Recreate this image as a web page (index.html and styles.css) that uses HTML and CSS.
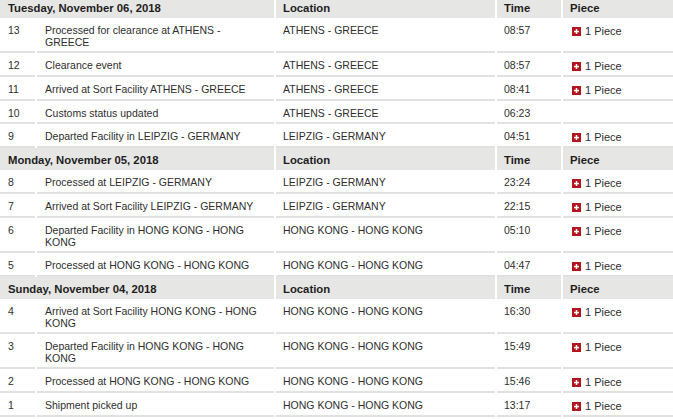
FILE: index.html
```html
<!DOCTYPE html>
<html lang="en">
<head>
<meta charset="utf-8">
<title>Shipment tracking</title>
<link rel="stylesheet" href="styles.css">
</head>
<body>
<svg width="0" height="0" class="defs" aria-hidden="true">
  <symbol id="plus" viewBox="0 0 9 9">
    <rect width="9" height="9" fill="#b3151d"/>
    <rect x="2" y="3.8" width="5" height="1.5" fill="#fff"/>
    <rect x="3.75" y="2" width="1.5" height="5" fill="#fff"/>
  </symbol>
</svg>
<table class="track">
  <colgroup>
    <col class="c-num"><col class="c-desc"><col class="c-loc"><col class="c-time"><col class="c-piece">
  </colgroup>
  <tbody>
    <tr class="head"><th colspan="2">Tuesday, November 06, 2018</th><th>Location</th><th>Time</th><th>Piece</th></tr>
    <tr><td>13</td><td>Processed for clearance at ATHENS - GREECE</td><td>ATHENS - GREECE</td><td>08:57</td><td class="piece"><svg class="ico"><use href="#plus"/></svg>1 Piece</td></tr>
    <tr><td>12</td><td>Clearance event</td><td>ATHENS - GREECE</td><td>08:57</td><td class="piece"><svg class="ico"><use href="#plus"/></svg>1 Piece</td></tr>
    <tr><td>11</td><td>Arrived at Sort Facility ATHENS - GREECE</td><td>ATHENS - GREECE</td><td>08:41</td><td class="piece"><svg class="ico"><use href="#plus"/></svg>1 Piece</td></tr>
    <tr><td>10</td><td>Customs status updated</td><td>ATHENS - GREECE</td><td>06:23</td><td></td></tr>
    <tr><td>9</td><td>Departed Facility in LEIPZIG - GERMANY</td><td>LEIPZIG - GERMANY</td><td>04:51</td><td class="piece"><svg class="ico"><use href="#plus"/></svg>1 Piece</td></tr>

    <tr class="head"><th colspan="2">Monday, November 05, 2018</th><th>Location</th><th>Time</th><th>Piece</th></tr>
    <tr><td>8</td><td>Processed at LEIPZIG - GERMANY</td><td>LEIPZIG - GERMANY</td><td>23:24</td><td class="piece"><svg class="ico"><use href="#plus"/></svg>1 Piece</td></tr>
    <tr><td>7</td><td>Arrived at Sort Facility LEIPZIG - GERMANY</td><td>LEIPZIG - GERMANY</td><td>22:15</td><td class="piece"><svg class="ico"><use href="#plus"/></svg>1 Piece</td></tr>
    <tr><td>6</td><td>Departed Facility in HONG KONG - HONG KONG</td><td>HONG KONG - HONG KONG</td><td>05:10</td><td class="piece"><svg class="ico"><use href="#plus"/></svg>1 Piece</td></tr>
    <tr><td>5</td><td>Processed at HONG KONG - HONG KONG</td><td>HONG KONG - HONG KONG</td><td>04:47</td><td class="piece"><svg class="ico"><use href="#plus"/></svg>1 Piece</td></tr>

    <tr class="head"><th colspan="2">Sunday, November 04, 2018</th><th>Location</th><th>Time</th><th>Piece</th></tr>
    <tr><td>4</td><td>Arrived at Sort Facility HONG KONG - HONG KONG</td><td>HONG KONG - HONG KONG</td><td>16:30</td><td class="piece"><svg class="ico"><use href="#plus"/></svg>1 Piece</td></tr>
    <tr><td>3</td><td>Departed Facility in HONG KONG - HONG KONG</td><td>HONG KONG - HONG KONG</td><td>15:49</td><td class="piece"><svg class="ico"><use href="#plus"/></svg>1 Piece</td></tr>
    <tr><td>2</td><td>Processed at HONG KONG - HONG KONG</td><td>HONG KONG - HONG KONG</td><td>15:46</td><td class="piece"><svg class="ico"><use href="#plus"/></svg>1 Piece</td></tr>
    <tr><td>1</td><td>Shipment picked up</td><td>HONG KONG - HONG KONG</td><td>13:17</td><td class="piece"><svg class="ico"><use href="#plus"/></svg>1 Piece</td></tr>
  </tbody>
</table>
</body>
</html>
```
FILE: styles.css
```css
html, body {
  margin: 0;
  padding: 0;
  background: #fff;
  overflow: hidden;
}
body {
  font-family: "Liberation Sans", Arial, sans-serif;
  color: #2e2e2e;
}
.defs {
  position: absolute;
  width: 0;
  height: 0;
}
.track {
  table-layout: fixed;
  width: 679px;
  border-collapse: separate;
  border-spacing: 2px 0;
  margin: -4px 0 0 -2px;
}
.c-num { width: 35px; }
.c-desc { width: 237px; }
.c-loc { width: 219px; }
.c-time { width: 64px; }
.c-piece { width: 112px; }

.track th,
.track td {
  box-sizing: border-box;
  text-align: left;
  vertical-align: top;
}
.head th {
  background: #e6e6e4;
  color: #1e1e1e;
  font-size: 11.3px;
  font-weight: bold;
  line-height: 12px;
  padding: 6px 7px 4px;
  height: 22px;
}
.head th:first-child { padding-left: 8px; }
.track td {
  font-size: 10.5px;
  line-height: 12px;
  padding: 6px 15px 3px 7px;
  border-bottom: 2px solid #e1e1e1;
}
.track td:nth-child(1),
.track td:nth-child(2) { padding-left: 8px; }
.track td.piece {
  padding-top: 7px;
  padding-right: 2px;
  white-space: nowrap;
  font-size: 11px;
}
.ico {
  display: inline-block;
  width: 9px;
  height: 9px;
  vertical-align: -1px;
  margin: 0 4px 0 2px;
}
```
